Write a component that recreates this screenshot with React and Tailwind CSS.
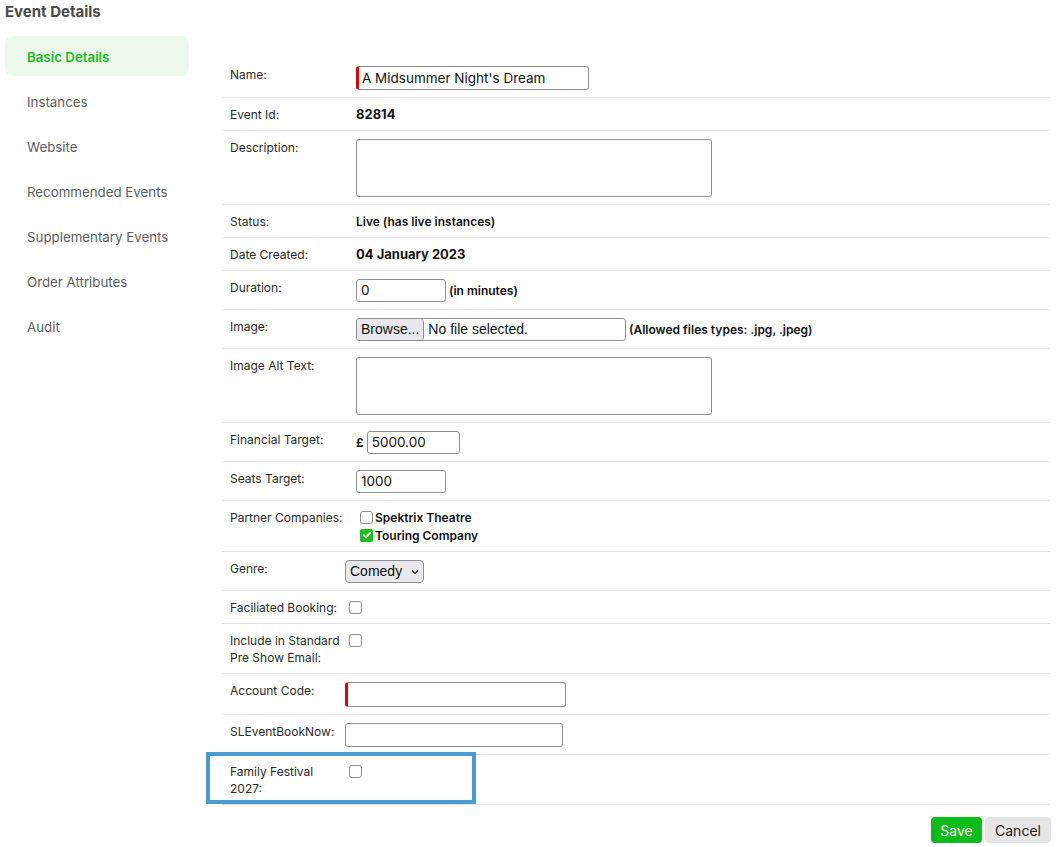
import React from "react";

const Check = ({ checked }) =>
  checked ? (
    <span className="inline-flex items-center justify-center w-[13px] h-[13px] rounded-[2px] bg-[#1cbf1c]">
      <svg width="10" height="10" viewBox="0 0 10 10">
        <path d="M1.8 5.2 L4 7.3 L8.3 2.6" fill="none" stroke="white" strokeWidth="1.8" strokeLinecap="round" strokeLinejoin="round" />
      </svg>
    </span>
  ) : (
    <span className="inline-block w-[13px] h-[13px] rounded-[3px] border border-[#8f8f8f] bg-white" />
  );

const Row = ({ label, w = "w-[126px]", children, className = "" }) => (
  <div className={"relative flex border-b border-[#e3e3e3] px-2 pt-[8px] pb-[7px] " + className}>
    <div className={"shrink-0 text-[12px] leading-[17px] text-[#2b2b2b] " + w}>{label}</div>
    <div className="flex-1 text-[12px] leading-[17px] text-[#111]">{children}</div>
  </div>
);

const inputCls =
  "h-[23px] border border-[#8f8f8f] rounded-[3px] bg-white text-[13.5px] text-[#111] px-[4px] flex items-center";

export default function App() {
  const nav = [
    "Instances",
    "Website",
    "Recommended Events",
    "Supplementary Events",
    "Order Attributes",
    "Audit",
  ];
  return (
    <div className="w-[1057px] h-[847px] bg-white font-['Inter',sans-serif] overflow-hidden">
      <h1 className="px-[5px] text-[15px] leading-[24px] font-bold text-[#4a4a4a]">Event Details</h1>
      <div className="flex mt-[12px]">
        <nav className="w-[184px] ml-[5px] shrink-0">
          <div className="h-[40px] mb-[5px] rounded-[8px] bg-[#edf8ec] pl-[22px] pt-[3px] flex items-center text-[13.3px] font-semibold text-[#1bbd1b]">
            Basic Details
          </div>
          {nav.map((n) => (
            <div key={n} className="h-[40px] mb-[5px] pl-[22px] pt-[4px] flex items-center text-[13.3px] text-[#5e5e5e]">
              {n}
            </div>
          ))}
        </nav>
        <main className="ml-[33px] w-[828px] pt-[22px]">
          <Row label="Name:">
            <div className={inputCls + " w-[233px] h-[24px] border-l-[3px] border-l-[#e60000] pl-[3px]"}>A Midsummer Night's Dream</div>
          </Row>
          <Row label="Event Id:">
            <span className="font-bold text-[13px]">82814</span>
          </Row>
          <Row label="Description:">
            <div className="w-[356px] h-[58px] border border-[#8f8f8f] rounded-[3px]" />
          </Row>
          <Row label="Status:">
            <span className="font-semibold">Live (has live instances)</span>
          </Row>
          <Row label="Date Created:">
            <span className="font-bold text-[13px]">04 January 2023</span>
          </Row>
          <Row label="Duration:">
            <div className="flex items-center gap-[3px]">
              <div className={inputCls + " w-[90px]"}>0</div>
              <span className="font-semibold">(in minutes)</span>
            </div>
          </Row>
          <Row label="Image:">
            <div className="flex items-center gap-[3px]">
              <div className="w-[270px] h-[23px] border border-[#8f8f8f] rounded-[3px] flex items-center font-['Liberation_Sans',Arial,sans-serif] text-[14px]">
                <span className="h-full px-[4px] flex items-center bg-[#e9e9ed] border-r border-[#8f8f8f] rounded-[3px] text-[#111]">Browse...</span>
                <span className="ml-[4px] text-[#111]">No file selected.</span>
              </div>
              <span className="font-semibold">(Allowed files types: .jpg, .jpeg)</span>
            </div>
          </Row>
          <Row label="Image Alt Text:">
            <div className="w-[356px] h-[58px] border border-[#8f8f8f] rounded-[3px]" />
          </Row>
          <Row label="Financial Target:">
            <div className="flex items-center gap-[3px]">
              <span className="font-bold text-[12px]">£</span>
              <div className={inputCls + " w-[93px]"}>5000.00</div>
            </div>
          </Row>
          <Row label="Seats Target:">
            <div className={inputCls + " w-[90px]"}>1000</div>
          </Row>
          <Row label="Partner Companies:">
            <div className="pl-[4px]">
              <div className="flex items-center gap-[2px] h-[17px]">
                <Check />
                <span className="font-semibold text-[12px]">Spektrix Theatre</span>
              </div>
              <div className="flex items-center gap-[2px] h-[18px]">
                <Check checked />
                <span className="font-semibold text-[12px]">Touring Company</span>
              </div>
            </div>
          </Row>
          <Row label="Genre:" w="w-[115px]">
            <div className="w-[79px] h-[23px] border border-[#8f8f8f] rounded-[4px] bg-[#e9e9ed] flex items-center px-[4px] justify-between font-['Liberation_Sans',Arial,sans-serif] text-[14px] text-[#111]">
              Comedy
              <svg width="8" height="6" viewBox="0 0 8 6">
                <path d="M1 1.5 L4 4.5 L7 1.5" fill="none" stroke="#222" strokeWidth="1.2" />
              </svg>
            </div>
          </Row>
          <Row label="Faciliated Booking:" w="w-[115px]">
            <div className="pl-[4px] pt-[2px] h-[17px]"><Check /></div>
          </Row>
          <Row label={<>Include in Standard<br />Pre Show Email:</>} w="w-[115px]">
            <div className="pl-[4px] pt-[2px]"><Check /></div>
          </Row>
          <Row label="Account Code:" w="w-[115px]">
            <div className={inputCls + " w-[221px] h-[25px] border-l-[3px] border-l-[#e60000]"} />
          </Row>
          <Row label="SLEventBookNow:" w="w-[115px]">
            <div className={inputCls + " w-[218px] h-[24px]"} />
          </Row>
          <Row label={<>Family Festival<br />2027:</>} w="w-[115px]">
            <div className="pl-[4px] pt-[2px]"><Check /></div>
            <div className="absolute left-[-16px] top-[-3px] w-[270px] h-[52px] border-[4px] border-[#4b9ad0] pointer-events-none" />
          </Row>
          <div className="flex justify-end gap-[3px] mt-[12px] mr-[-1px]">
            <button className="h-[26px] w-[51px] rounded-[4px] bg-[#0cbb1c] text-white text-[14px]">Save</button>
            <button className="h-[26px] w-[66px] rounded-[4px] bg-[#e6e6e6] text-[#222] text-[14px]">Cancel</button>
          </div>
        </main>
      </div>
    </div>
  );
}
